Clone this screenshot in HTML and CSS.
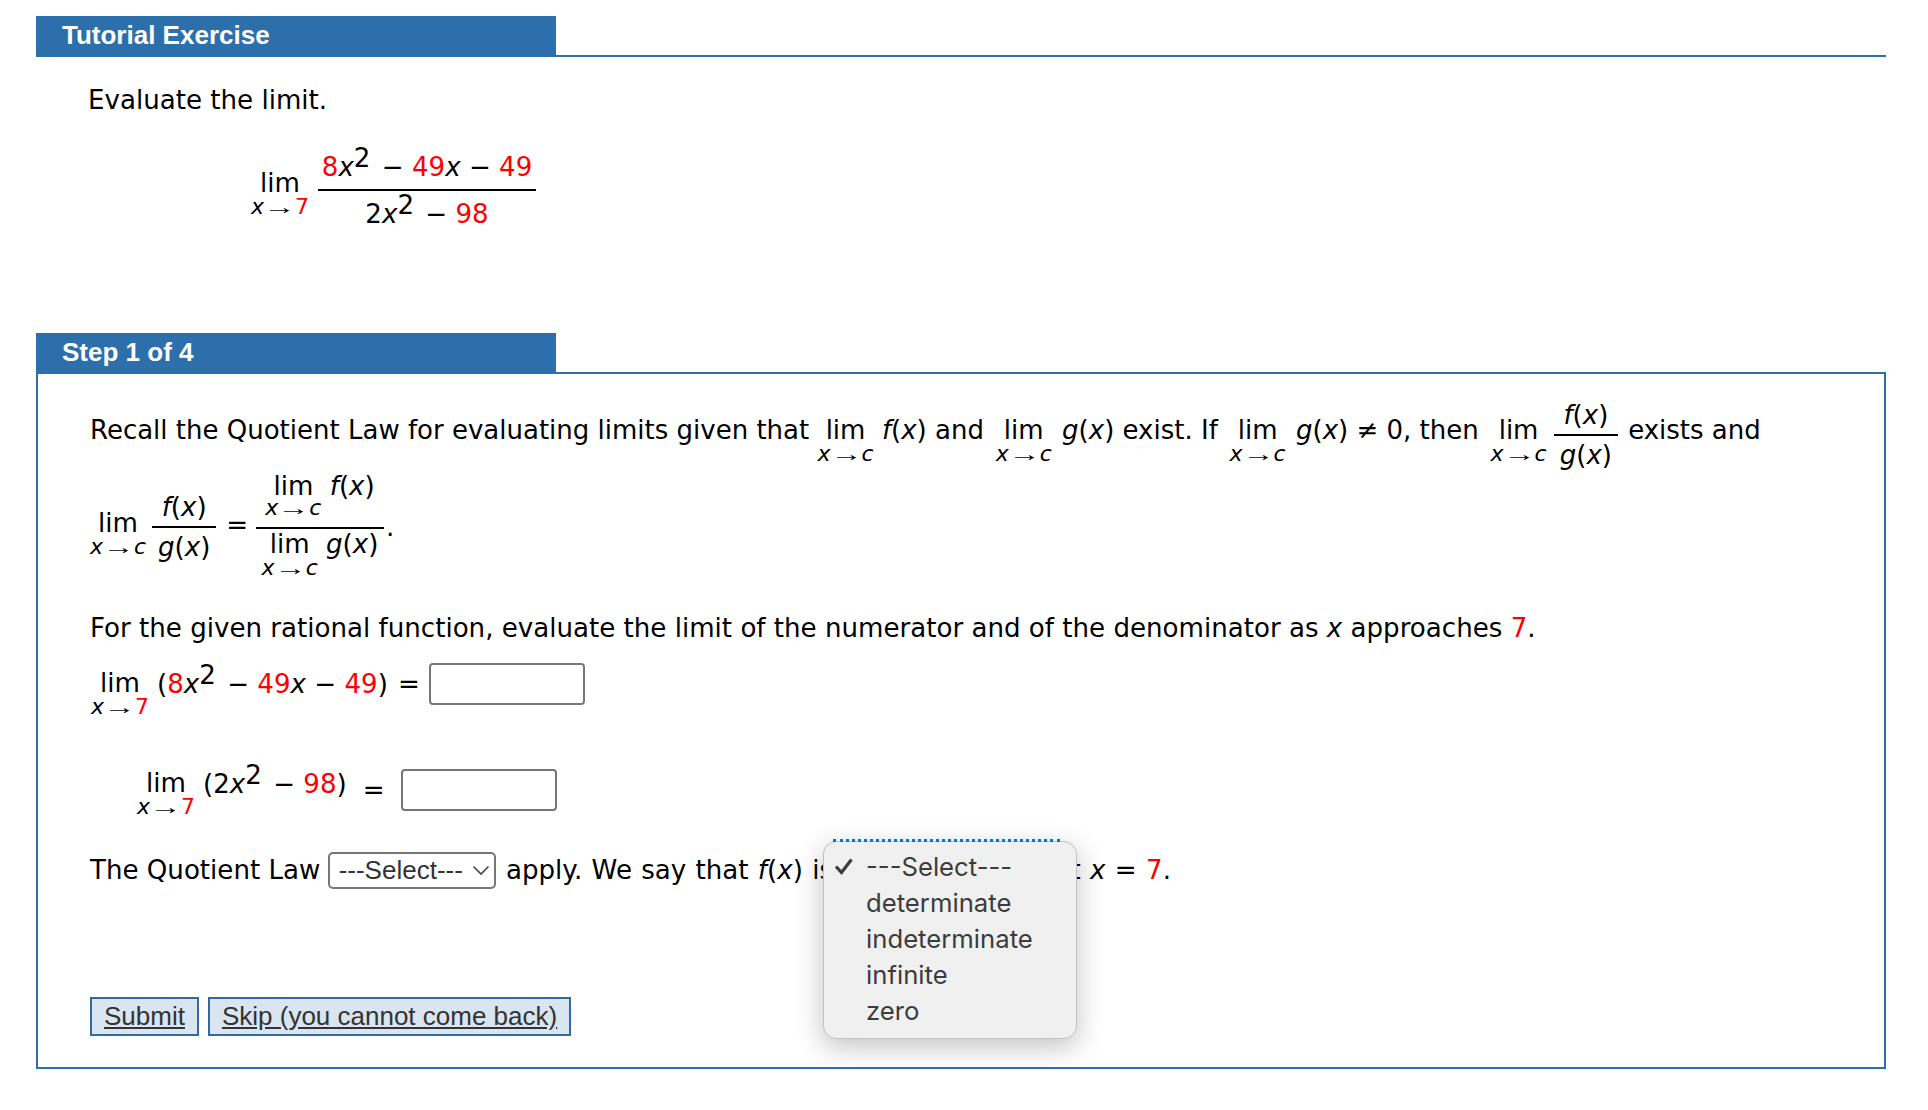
FILE: index.html
```html
<!DOCTYPE html>
<html lang="en">
<head>
    <meta charset="UTF-8">
    <title>Tutorial Exercise</title>
    <link rel="stylesheet" href="styles.css">
</head>
<body>
    <div class="section-head">
        <div class="tab">Tutorial Exercise</div>
    </div>
    <div class="intro">
        <p class="intro-text">Evaluate the limit.</p>
        <div class="intro-math">
            <span class="lim">lim<span class="under"><i>x</i><span class="arrow">→</span><span class="red">7</span></span></span>
            <span class="frac frac-wide">
                <span class="top"><span class="red">8</span><i>x</i><sup>2</sup> − <span class="red">49</span><i>x</i> − <span class="red">49</span></span>
                <span class="bottom">2<i>x</i><sup>2</sup> − <span class="red">98</span></span>
            </span>
        </div>
    </div>

    <div class="section-head step-head">
        <div class="tab">Step 1 of 4</div>
    </div>
    <div class="step-box">
        <p class="recall">Recall the Quotient Law for evaluating limits given that
            <span class="lim">lim<span class="under"><i>x</i><span class="arrow">→</span><i>c</i></span></span> <i>f</i>(<i>x</i>) and
            <span class="lim">lim<span class="under"><i>x</i><span class="arrow">→</span><i>c</i></span></span> <i>g</i>(<i>x</i>) exist. If
            <span class="lim">lim<span class="under"><i>x</i><span class="arrow">→</span><i>c</i></span></span> <i>g</i>(<i>x</i>) ≠ 0, then
            <span class="lim">lim<span class="under"><i>x</i><span class="arrow">→</span><i>c</i></span></span>
            <span class="frac frac-inline">
                <span class="top"><i>f</i>(<i>x</i>)</span>
                <span class="bottom"><i>g</i>(<i>x</i>)</span>
            </span> exists and</p>

        <div class="quotient-law">
            <span class="lim lim-low">lim<span class="under"><i>x</i><span class="arrow">→</span><i>c</i></span></span>
            <span class="frac frac-small">
                <span class="top"><i>f</i>(<i>x</i>)</span>
                <span class="bottom"><i>g</i>(<i>x</i>)</span>
            </span>
            <span class="equals">=</span>
            <span class="frac frac-big">
                <span class="top"><span class="lim">lim<span class="under"><i>x</i><span class="arrow">→</span><i>c</i></span></span> <i>f</i>(<i>x</i>)</span>
                <span class="bottom"><span class="lim">lim<span class="under"><i>x</i><span class="arrow">→</span><i>c</i></span></span> <i>g</i>(<i>x</i>)</span>
            </span>
            <span class="period">.</span>
        </div>

        <p class="given">For the given rational function, evaluate the limit of the numerator and of the denominator as <i>x</i> approaches <span class="red">7</span>.</p>

        <div class="answer-row row-one">
            <span class="lim">lim<span class="under"><i>x</i><span class="arrow">→</span><span class="red">7</span></span></span>
            <span class="expr">(<span class="red">8</span><i>x</i><sup>2</sup> − <span class="red">49</span><i>x</i> − <span class="red">49</span>)</span>
            <span class="eq">=</span>
            <input type="text" class="answer">
        </div>

        <div class="answer-row row-two">
            <span class="lim">lim<span class="under"><i>x</i><span class="arrow">→</span><span class="red">7</span></span></span>
            <span class="expr">(2<i>x</i><sup>2</sup> − <span class="red">98</span>)</span>
            <span class="eq eq-low">=</span>
            <input type="text" class="answer">
        </div>

        <p class="conclusion"><span class="law">The Quotient Law</span>
            <span class="select-wrap">
                <select class="pick pick-first">
                    <option>---Select---</option>
                </select>
                <svg class="chevron" width="18" height="11" viewBox="0 0 18 11"><path d="M1.5 1.5 L9 9 L16.5 1.5" fill="none" stroke="#444" stroke-width="1.6"/></svg>
            </span>
            apply. We say that <i>f</i>(<i>x</i>) is
            <span class="select-hidden"></span>
            at <i>x</i> = <span class="red">7</span>.</p>

        <div class="buttons">
            <button class="link-btn">Submit</button>
            <button class="link-btn">Skip (you cannot come back)</button>
        </div>

        <div class="popup">
            <div class="popup-row">
                <svg class="check" width="20" height="18" viewBox="0 0 20 18"><path d="M2 9.5 L7.5 15.5 L17.5 2.5" fill="none" stroke="#3c3c3c" stroke-width="3.2"/></svg>
                ---Select---
            </div>
            <div class="popup-row">determinate</div>
            <div class="popup-row">indeterminate</div>
            <div class="popup-row">infinite</div>
            <div class="popup-row">zero</div>
        </div>
    </div>
</body>
</html>
```

FILE: styles.css
```css
body {
    margin: 0;
    padding: 16px 42px 0 36px;
    background-color: #fff;
    color: #000;
    font-family: "DejaVu Sans", Verdana, sans-serif;
    font-size: 26.1px;
}
p {
    margin: 0;
}
sup {
    font-size: 1em;
    line-height: 0;
    vertical-align: 0.36em;
    margin-right: 3px;
}
.red {
    color: #ff0000;
}
.section-head {
    border-bottom: 2px solid #2c6fab;
    height: 39px;
}
.tab {
    width: 494px;
    height: 41px;
    padding-left: 26px;
    background-color: #2c6fab;
    color: #fff;
    font-family: "Liberation Sans", Arial, sans-serif;
    font-size: 26px;
    font-weight: bold;
    line-height: 39px;
}
.intro {
    height: 276px;
}
.intro-text {
    padding: 28px 0 0 52px;
    line-height: 30px;
}
.intro-math {
    display: flex;
    align-items: center;
    gap: 9px;
    margin: 30px 0 0 215px;
}
.intro-math > .lim {
    position: relative;
    top: 3px;
}
.lim {
    display: inline-flex;
    flex-direction: column;
    align-items: center;
    line-height: 26px;
}
.under {
    font-size: 22px;
    line-height: 22px;
    white-space: nowrap;
}
.arrow {
    display: inline-block;
    width: 31px;
    font-family: "Liberation Serif", serif;
    font-size: 20px;
    line-height: 0;
    text-align: center;
    transform: scaleX(1.6);
}
.frac {
    display: inline-flex;
    flex-direction: column;
    align-items: center;
}
.frac .top {
    border-bottom: 2px solid #000;
    text-align: center;
    align-self: stretch;
}
.frac .bottom {
    text-align: center;
}
.frac-wide {
    width: 218px;
    line-height: 46px;
}
.frac-wide .top {
    line-height: 44px;
}
.step-head {
    height: 39px;
}
.step-box {
    position: relative;
    height: 693px;
    border: 2px solid #2c6fab;
    border-top: 0;
    padding-left: 52px;
}
.recall {
    box-sizing: border-box;
    height: 95px;
    padding-top: 22px;
    font-size: 26px;
    line-height: 30px;
    white-space: nowrap;
}
.recall .lim ~ .lim {
    margin: 0 2px 0 3.5px;
}
.frac-inline {
    vertical-align: 15px;
    width: 64px;
    margin: 0 2px 0 -3px;
    line-height: 38px;
}
.quotient-law {
    display: flex;
    align-items: center;
    margin-top: 8px;
    height: 100px;
}
.lim-low {
    position: relative;
    top: 7px;
}
.frac-small {
    width: 64px;
    margin-left: 6px;
    line-height: 38px;
}
.equals {
    position: relative;
    top: -2px;
    margin: 0 8px 0 10px;
}
.frac-big {
    width: 128px;
    margin-top: -4px;
    line-height: 30px;
}
.frac-big .top {
    padding-bottom: 8px;
}
.frac-big .top .under {
    margin-top: -2px;
}
.period {
    margin-left: 2px;
}
.given {
    margin-top: 36px;
    line-height: 30px;
}
.answer-row {
    display: flex;
    align-items: center;
    gap: 10px;
}
.answer-row .lim {
    margin-right: -2px;
}
.row-one {
    margin-top: 17px;
    margin-left: 1px;
}
.row-one .lim {
    position: relative;
    top: 10px;
}
.row-one .eq {
    margin-right: -1px;
}
.row-two {
    margin-top: 58px;
    margin-left: 47px;
}
.row-two .lim {
    position: relative;
    top: 4px;
}
.row-two .expr {
    position: relative;
    top: -6px;
}
.eq-low {
    margin: 0 6px 0 6px;
}
.answer {
    width: 156px;
    height: 42px;
    box-sizing: border-box;
    border: 2px solid #767676;
    border-radius: 4px;
    background-color: #fff;
    padding: 0 4px;
    font-size: 24px;
}
.conclusion {
    margin-top: 37px;
    line-height: 38px;
    white-space: nowrap;
    word-spacing: 1px;
}
.law {
    word-spacing: 0;
}
.select-wrap {
    position: relative;
    display: inline-block;
    margin: 0 1px 0 -2px;
    vertical-align: baseline;
}
.pick {
    appearance: none;
    display: block;
    width: 168px;
    height: 37px;
    padding: 0 0 0 9px;
    border: 2px solid #767676;
    border-radius: 5px;
    background-color: #fff;
    color: #333;
    font-family: "Liberation Sans", Arial, sans-serif;
    font-size: 26px;
}
.chevron {
    position: absolute;
    right: 6px;
    top: 13px;
}
.select-hidden {
    display: inline-block;
    width: 203px;
}
.buttons {
    display: flex;
    gap: 9px;
    margin-top: 108px;
}
.link-btn {
    height: 39px;
    padding: 0 12px;
    border: 2px solid #306a9e;
    background-color: #d9e5f0;
    color: #333;
    font-family: "Liberation Sans", Arial, sans-serif;
    font-size: 26px;
    text-decoration: underline;
}
.popup {
    position: absolute;
    left: 785px;
    top: 467px;
    width: 254px;
    height: 198px;
    padding-top: 7px;
    box-sizing: border-box;
    background-color: #f0f0f1;
    border: 1px solid #c2c2c2;
    border-radius: 13px;
    box-shadow: 0 8px 28px rgba(0, 0, 0, 0.24);
    color: #3c3c3c;
    font-family: Inter, "Liberation Sans", sans-serif;
    font-size: 25.7px;
}
.popup::before {
    content: "";
    position: absolute;
    left: 9px;
    right: 16px;
    top: -3px;
    border-top: 3px dotted #0a74d6;
}
.popup-row {
    position: relative;
    height: 36px;
    line-height: 36px;
    padding-left: 42px;
}
.check {
    position: absolute;
    left: 10px;
    top: 8px;
}
```
